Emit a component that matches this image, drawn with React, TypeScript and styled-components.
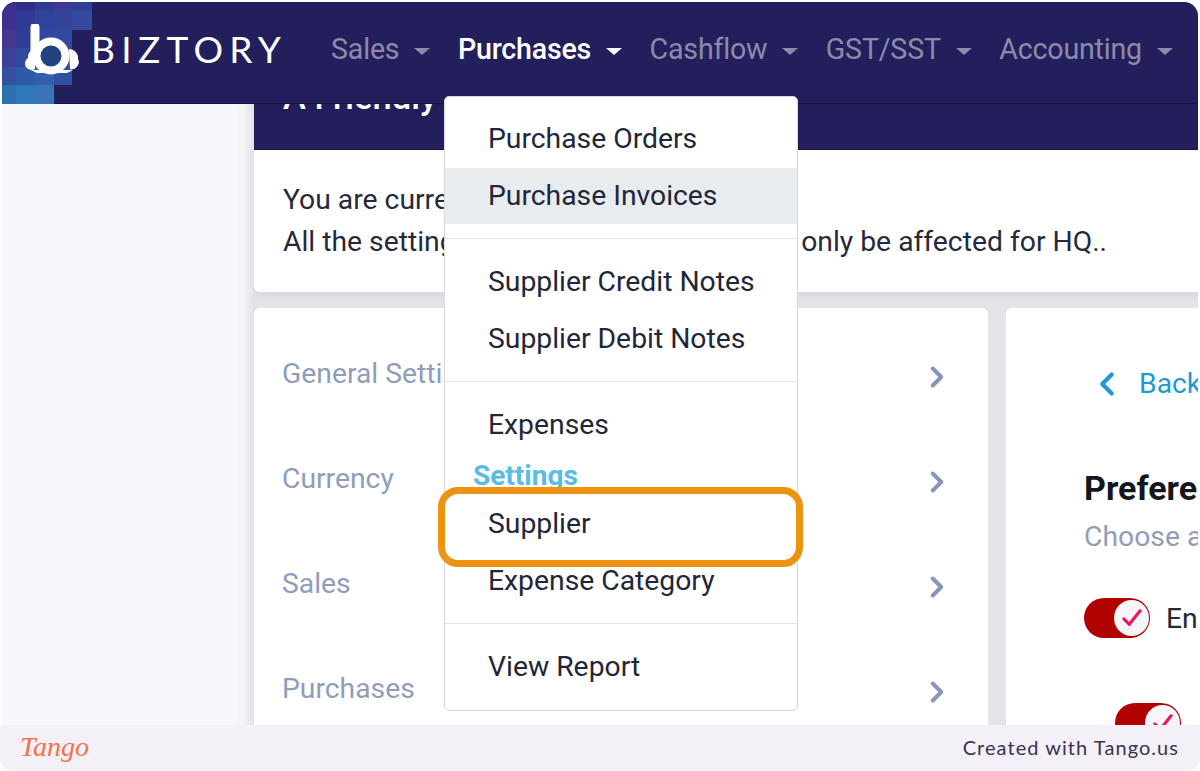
import React from 'react';
import styled, { createGlobalStyle } from 'styled-components';
import { ChevronLeft, ChevronRight } from 'lucide-react';

const GlobalStyle = createGlobalStyle`
  html, body { margin: 0; padding: 0; background: #fff; }
  body { font-family: Roboto, "Liberation Sans", sans-serif; }
  * { box-sizing: border-box; }
`;

const navLinks = ['Sales', 'Purchases', 'Cashflow', 'GST/SST', 'Accounting'];
const settings = ['General Settings', 'Currency', 'Sales', 'Purchases'];

// mosaic behind the logo: [x, y, w, h, colour]
const tiles: [number, number, number, number, string][] = [
  [0, 0, 14, 8, '#3a2f8c'], [14, 0, 19, 8, '#2c2f85'], [33, 0, 19, 8, '#2f3a94'], [52, 0, 18, 8, '#3c3a96'], [70, 0, 20, 8, '#2f3f94'],
  [0, 8, 14, 20, '#40308f'], [14, 8, 19, 20, '#2f3a94'], [33, 8, 19, 20, '#2f439c'], [52, 8, 18, 20, '#35429a'], [70, 8, 20, 20, '#334a9e'],
  [0, 28, 14, 18, '#46378f'], [14, 28, 19, 18, '#333d96'], [33, 28, 19, 18, '#30489e'], [52, 28, 18, 18, '#2f4a9e'],
  [0, 46, 14, 19, '#3d4098'], [14, 46, 19, 19, '#2f4a9f'], [33, 46, 19, 19, '#2f4fa2'], [52, 46, 18, 19, '#2f4a9e'],
  [0, 65, 14, 18, '#35509f'], [14, 65, 19, 18, '#2f5aa8'], [33, 65, 19, 18, '#3260ac'], [52, 65, 18, 18, '#2f4f9f'],
  [0, 83, 14, 19, '#2f6fb0'], [14, 83, 19, 19, '#3079b8'], [33, 83, 19, 19, '#3a74b6'],
];

const Frame = styled.div`
  display: flex;
  flex-direction: column;
  width: 1200px;
  height: 771px;
  overflow: hidden;
  border-radius: 0 0 14px 14px;
  background: #fff;
`;

const Window = styled.div`
  position: relative;
  flex: 1;
  display: flex;
  flex-direction: column;
  min-height: 0;
  margin: 2px 2px 0;
  overflow: hidden;
  border-radius: 14px 14px 0 0;
  background: #e2e4e8;
`;

const NavBar = styled.header`
  position: relative;
  z-index: 1;
  flex: 0 0 102px;
  display: flex;
  align-items: flex-start;
  padding: 0 0 0 23px;
  background: #231f5c;
  border-bottom: 1px solid #17143f;
`;

const Mosaic = styled.svg`
  position: absolute;
  left: 0;
  top: 0;
`;

const Brand = styled.div`
  position: relative;
  display: flex;
  align-items: center;
  gap: 12px;
  height: 94px;
  width: 306px;
  flex: none;
`;

const BrandName = styled.span`
  color: #fff;
  font: 400 37px Lato, sans-serif;
  letter-spacing: 6.3px;
  margin-top: -2px;
`;

const NavList = styled.nav`
  display: flex;
  gap: 27.5px;
  height: 94px;
  align-items: center;
  white-space: nowrap;
`;

const NavItem = styled.a<{ $active?: boolean }>`
  display: flex;
  align-items: center;
  gap: 15px;
  font-size: 28.6px;
  letter-spacing: -0.2px;
  font-weight: ${p => (p.$active ? 500 : 400)};
  color: ${p => (p.$active ? '#fff' : '#8c8bab')};
  &::after {
    content: '';
    margin-top: 4px;
    border-left: 8px solid transparent;
    border-right: 8px solid transparent;
    border-top: 7px solid currentColor;
  }
`;

const Body = styled.div`
  flex: 1;
  display: flex;
  min-height: 0;
`;

const Sidebar = styled.aside`
  flex: 0 0 252px;
  background: #f7f8fc;
  box-shadow: inset -16px 0 14px -12px #d9dade;
`;

const Main = styled.main`
  flex: 1;
  min-width: 0;
  overflow: hidden;
`;

const Banner = styled.div`
  height: 46px;
  width: 1000px;
  background: #231f5c;
  border-bottom: 1px solid #17143f;
  overflow: hidden;
`;

const BannerTitle = styled.div`
  margin: -29px 0 0 29px;
  color: #fff;
  font-size: 34.5px;
  font-weight: 500;
  line-height: 44px;
`;

const Notice = styled.section`
  width: 1000px;
  height: 142px;
  padding: 29px 29px 0;
  background: #fff;
  border-radius: 0 0 6px 6px;
  box-shadow: 0 4px 10px rgba(0, 0, 0, 0.05);
  color: #26293c;
  font-size: 28.3px;
  line-height: 42px;
  white-space: nowrap;
`;

const Cards = styled.div`
  display: flex;
  gap: 18px;
  margin-top: 16px;
`;

const SettingsCard = styled.section`
  flex: 0 0 734px;
  height: 500px;
  padding: 50px 38px 0 28px;
  background: #fff;
  border-radius: 6px;
`;

const SettingRow = styled.div`
  display: flex;
  justify-content: space-between;
  align-items: center;
  height: 105px;
  padding-bottom: 74px;
  color: #8f9dbb;
  font-size: 28.3px;
  svg { color: #8794bd; margin: 6px -3.5px 0 0; }
`;

const PrefCard = styled.section`
  flex: 0 0 400px;
  height: 500px;
  padding: 56px 0 0 78px;
  background: #fff;
  border-radius: 6px;
  white-space: nowrap;
`;

const BackLink = styled.div`
  display: flex;
  align-items: center;
  gap: 13px;
  margin-left: 4px;
  color: #1c9ad6;
  font-size: 28.3px;
  line-height: 40px;
`;

const PrefTitle = styled.h2`
  margin: 62px 0 0;
  color: #14161f;
  font-size: 34px;
  font-weight: 700;
  line-height: 44px;
`;

const PrefHint = styled.p`
  margin: 9px 0 0;
  color: #8f9dbb;
  font-size: 28.3px;
  line-height: 36px;
`;

const ToggleRow = styled.div<{ $indent?: boolean }>`
  display: flex;
  align-items: center;
  gap: 16px;
  margin: ${p => (p.$indent ? '65px 0 0 31px' : '43px 0 0')};
  color: #26293c;
  font-size: 28.3px;
`;

const Toggle = styled.div`
  display: flex;
  justify-content: flex-end;
  align-items: center;
  flex: none;
  width: 66px;
  height: 40px;
  padding: 1px;
  border-radius: 20px;
  background: #b10000;
`;

const Knob = styled.div`
  display: flex;
  align-items: center;
  justify-content: center;
  width: 35px;
  height: 36px;
  border-radius: 50%;
  background: #f6f6f8;
`;

const Menu = styled.div`
  position: absolute;
  left: 442px;
  top: 94px;
  width: 354px;
  height: 615px;
  padding-top: 14px;
  background: #fff;
  border: 1px solid #d5d7db;
  border-radius: 5px;
  z-index: 2;
`;

const MenuItem = styled.div<{ $hover?: boolean }>`
  height: 56.5px;
  line-height: 56.5px;
  padding-left: 43px;
  font-size: 28.3px;
  color: #22263a;
  background: ${p => (p.$hover ? '#e9ecef' : 'transparent')};
`;

const MenuDivider = styled.hr`
  margin: 14px 0 15px;
  border: 0;
  border-top: 1px solid #e2e3e6;
`;

const MenuHeading = styled.div`
  height: 42.5px;
  line-height: 44px;
  padding-left: 28px;
  color: #58bde3;
  font-size: 28px;
  font-weight: 700;
`;

const Highlight = styled.div`
  position: absolute;
  left: 436px;
  top: 485px;
  width: 365px;
  height: 80px;
  border: 7px solid #ee9311;
  border-radius: 20px;
  z-index: 3;
`;

const Footer = styled.footer`
  flex: 0 0 46px;
  display: flex;
  align-items: center;
  justify-content: space-between;
  padding: 0 21px 0 20px;
  background: #f3f1f7;
`;

const TangoMark = styled.span`
  color: #f9704a;
  font: italic 400 28px "Liberation Serif", serif;
  margin-top: -2px;
`;

const TangoCredit = styled.span`
  color: #3a3350;
  font: 400 20px Lato, sans-serif;
  letter-spacing: 1.05px;
  margin-top: -2px;
`;

function Tick() {
  return (
    <svg width="20" height="18" viewBox="0 0 22 20" fill="none" stroke="#f0135f" strokeWidth="3.4" strokeLinecap="round" strokeLinejoin="round">
      <polyline points="2,11 8,17 20,2" />
    </svg>
  );
}

export default function App() {
  return (
    <Frame>
      <GlobalStyle />
      <Window>
        <NavBar>
          <Mosaic width="90" height="102" shapeRendering="crispEdges">
            {tiles.map(([x, y, w, h, c], i) => <rect key={i} x={x} y={y} width={w} height={h} fill={c} />)}
          </Mosaic>
          <Brand>
            <svg width="54" height="52" viewBox="0 0 54 52" style={{ marginTop: 2 }}>
              <path d="M3 34a8 8 0 0 1 7-9l0 20a6 6 0 0 1-7-11zM44 25a9 9 0 0 1 9 10a7 7 0 0 1-8 10z" fill="#fff" />
              <path d="M10 3v29" stroke="#fff" strokeWidth="9" strokeLinecap="round" fill="none" />
              <circle cx="26" cy="32" r="14.5" fill="#23437f" stroke="#fff" strokeWidth="8" />
              <path d="M6 46h42l-6 3H12z" fill="#fff" />
            </svg>
            <BrandName>BIZTORY</BrandName>
          </Brand>
          <NavList>
            {navLinks.map(l => <NavItem key={l} $active={l === 'Purchases'}>{l}</NavItem>)}
          </NavList>
        </NavBar>
        <Body>
          <Sidebar />
          <Main>
            <Banner><BannerTitle>A Friendly</BannerTitle></Banner>
            <Notice>
              You are currently viewing<br />
              All the settings you make in this view will only be affected for HQ..
            </Notice>
            <Cards>
              <SettingsCard>
                {settings.map(s => (
                  <SettingRow key={s}>
                    {s}
                    <ChevronRight size={34} strokeWidth={2.8} />
                  </SettingRow>
                ))}
              </SettingsCard>
              <PrefCard>
                <BackLink><ChevronLeft size={38} strokeWidth={2.6} />Back</BackLink>
                <PrefTitle>Preferences</PrefTitle>
                <PrefHint>Choose a</PrefHint>
                <ToggleRow>
                  <Toggle><Knob><Tick /></Knob></Toggle>
                  Enable
                </ToggleRow>
                <ToggleRow $indent>
                  <Toggle><Knob><Tick /></Knob></Toggle>
                </ToggleRow>
              </PrefCard>
            </Cards>
          </Main>
        </Body>
        <Menu>
          <MenuItem>Purchase Orders</MenuItem>
          <MenuItem $hover>Purchase Invoices</MenuItem>
          <MenuDivider />
          <MenuItem>Supplier Credit Notes</MenuItem>
          <MenuItem>Supplier Debit Notes</MenuItem>
          <MenuDivider />
          <MenuItem>Expenses</MenuItem>
          <MenuHeading>Settings</MenuHeading>
          <MenuItem>Supplier</MenuItem>
          <MenuItem>Expense Category</MenuItem>
          <MenuDivider />
          <MenuItem>View Report</MenuItem>
        </Menu>
        <Highlight />
      </Window>
      <Footer>
        <TangoMark>Tango</TangoMark>
        <TangoCredit>Created with Tango.us</TangoCredit>
      </Footer>
    </Frame>
  );
}
